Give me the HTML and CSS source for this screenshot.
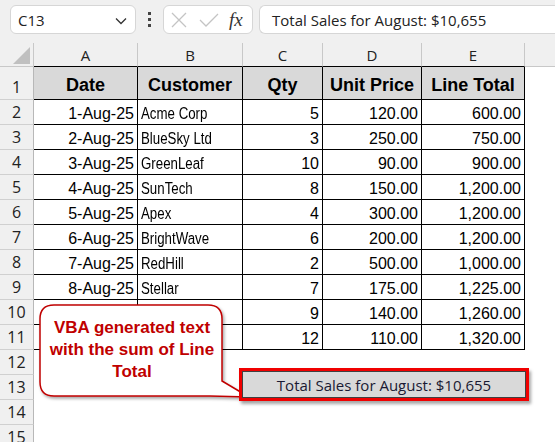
FILE: index.html
```html
<!DOCTYPE html>
<html>
<head>
<meta charset="utf-8">
<link rel="stylesheet" href="styles.css">
</head>
<body>
<div class="app">
  <div class="toolbar">
    <div class="namebox">
      <span class="nb-text">C13</span>
      <svg class="chev" width="12" height="8" viewBox="0 0 12 8"><path d="M1 1.5 L6 6.5 L11 1.5" fill="none" stroke="#333" stroke-width="1.3"/></svg>
    </div>
    <div class="vdots"><span></span><span></span><span></span></div>
    <div class="fxbox">
      <svg width="16" height="16" viewBox="0 0 16 16"><path d="M1 1 L15 15 M15 1 L1 15" stroke="#c4c4c4" stroke-width="1.3" fill="none"/></svg>
      <svg width="20" height="16" viewBox="0 0 20 16"><path d="M1 8 L7 14 L19 2" stroke="#c4c4c4" stroke-width="1.3" fill="none"/></svg>
      <span class="fx">fx</span>
    </div>
    <div class="formula">Total Sales for August: $10,655</div>
  </div>

  <div class="sheet">
    <div class="corner"><svg width="33" height="24" viewBox="0 0 33 24"><polygon points="13,21 30,21 30,4" fill="#c0c0c0"/></svg></div>
    <div class="ch t-b">A</div><div class="ch t-b">B</div><div class="ch t-b">C</div><div class="ch t-b">D</div><div class="ch t-b">E</div><div class="ch last"></div>

    <div class="rh">1</div>
    <div class="c t h">Date</div><div class="c t h">Customer</div><div class="c t h">Qty</div><div class="c t h">Unit Price</div><div class="c t h">Line Total</div><div class="c"></div>

    <div class="rh">2</div>
    <div class="c t d">1-Aug-25</div><div class="c t n"><span>Acme Corp</span></div><div class="c t r">5</div><div class="c t r">120.00</div><div class="c t r">600.00</div><div class="c"></div>
    <div class="rh">3</div>
    <div class="c t d">2-Aug-25</div><div class="c t n"><span>BlueSky Ltd</span></div><div class="c t r">3</div><div class="c t r">250.00</div><div class="c t r">750.00</div><div class="c"></div>
    <div class="rh">4</div>
    <div class="c t d">3-Aug-25</div><div class="c t n"><span>GreenLeaf</span></div><div class="c t r">10</div><div class="c t r">90.00</div><div class="c t r">900.00</div><div class="c"></div>
    <div class="rh">5</div>
    <div class="c t d">4-Aug-25</div><div class="c t n"><span>SunTech</span></div><div class="c t r">8</div><div class="c t r">150.00</div><div class="c t r">1,200.00</div><div class="c"></div>
    <div class="rh">6</div>
    <div class="c t d">5-Aug-25</div><div class="c t n"><span>Apex</span></div><div class="c t r">4</div><div class="c t r">300.00</div><div class="c t r">1,200.00</div><div class="c"></div>
    <div class="rh">7</div>
    <div class="c t d">6-Aug-25</div><div class="c t n"><span>BrightWave</span></div><div class="c t r">6</div><div class="c t r">200.00</div><div class="c t r">1,200.00</div><div class="c"></div>
    <div class="rh">8</div>
    <div class="c t d">7-Aug-25</div><div class="c t n"><span>RedHill</span></div><div class="c t r">2</div><div class="c t r">500.00</div><div class="c t r">1,000.00</div><div class="c"></div>
    <div class="rh">9</div>
    <div class="c t d">8-Aug-25</div><div class="c t n"><span>Stellar</span></div><div class="c t r">7</div><div class="c t r">175.00</div><div class="c t r">1,225.00</div><div class="c"></div>
    <div class="rh">10</div>
    <div class="c t d"></div><div class="c t n"></div><div class="c t r">9</div><div class="c t r">140.00</div><div class="c t r">1,260.00</div><div class="c"></div>
    <div class="rh">11</div>
    <div class="c t d"></div><div class="c t n"></div><div class="c t r">12</div><div class="c t r">110.00</div><div class="c t r">1,320.00</div><div class="c"></div>
    <div class="rh">12</div><div class="c"></div><div class="c"></div><div class="c"></div><div class="c"></div><div class="c"></div><div class="c"></div>
    <div class="rh">13</div><div class="c"></div><div class="c"></div><div class="c"></div><div class="c"></div><div class="c"></div><div class="c"></div>
    <div class="rh">14</div><div class="c"></div><div class="c"></div><div class="c"></div><div class="c"></div><div class="c"></div><div class="c"></div>
    <div class="rh">15</div><div class="c"></div><div class="c"></div><div class="c"></div><div class="c"></div><div class="c"></div><div class="c"></div>
  </div>

  <div class="callout">
    <svg class="callout-bg" width="230" height="110" viewBox="0 0 230 110">
      <defs>
        <filter id="sh" x="-10%" y="-10%" width="130%" height="130%">
          <feDropShadow dx="1.5" dy="2" stdDeviation="1.5" flood-color="#000" flood-opacity="0.35"/>
        </filter>
      </defs>
      <path d="M16 2 H170 Q184 2 184 16 V78 L211 94 L172 93 H16 Q2 93 2 79 V16 Q2 2 16 2 Z" fill="#fff" stroke="#c00000" stroke-width="1.5" filter="url(#sh)"/>
    </svg>
    <div class="callout-text">VBA generated text with the sum of Line Total</div>
  </div>

  <div class="tbox">
    <div class="tbox-in">Total Sales for August: $10,655</div>
  </div>
</div>
</body>
</html>
```

FILE: styles.css
```css
html, body {
  margin: 0;
  padding: 0;
  background: #ffffff;
}
.app {
  position: relative;
  width: 555px;
  height: 442px;
  overflow: hidden;
  background: #ffffff;
  font-family: "Liberation Sans", Arial, sans-serif;
}
.toolbar {
  height: 43px;
  box-sizing: border-box;
  background: #f0f0f0;
  display: flex;
  align-items: flex-start;
  padding: 5px 0 0 10px;
}
.namebox {
  width: 126px;
  height: 29px;
  box-sizing: border-box;
  background: #fff;
  border: 1px solid #d6d6d6;
  border-radius: 6px;
  display: flex;
  align-items: center;
  justify-content: space-between;
  padding: 0 8px 0 7px;
  font-family: "Open Sans", "Noto Sans", sans-serif;
  font-size: 15px;
  color: #222;
}
.chev { margin-top: 2px; }
.vdots {
  width: 27px;
  height: 29px;
  display: flex;
  flex-direction: column;
  align-items: center;
  justify-content: center;
  gap: 3px;
}
.vdots span {
  width: 3px;
  height: 3px;
  background: #444;
}
.fxbox {
  width: 90px;
  height: 29px;
  box-sizing: border-box;
  background: #fff;
  border: 1px solid #d6d6d6;
  border-radius: 6px;
  display: flex;
  align-items: center;
  gap: 12px;
  padding-left: 7px;
}
.fx {
  font-family: "Liberation Serif", serif;
  font-style: italic;
  font-size: 19px;
  color: #333;
  margin-left: -2px;
}
.formula {
  flex: 1;
  margin-left: 6px;
  height: 29px;
  box-sizing: border-box;
  background: #fff;
  border: 1px solid #d6d6d6;
  border-right: none;
  border-radius: 6px 0 0 6px;
  padding-left: 12px;
  display: flex;
  align-items: center;
  font-family: "Open Sans", "Noto Sans", sans-serif;
  font-size: 15px;
  color: #222;
}
.sheet {
  display: grid;
  grid-template-columns: 34px 104px 105px 80px 99px 103px 1fr;
  grid-template-rows: 24px 33px repeat(14, 25px);
}
.sheet > div {
  box-sizing: border-box;
}
.corner {
  background: #f0f0f0;
  border-right: 1px solid #c8c8c8;
  border-bottom: 1px solid #c8c8c8;
}
.corner svg { display: block; }
.ch {
  background: #f0f0f0;
  border-right: 1px solid #c8c8c8;
  border-bottom: 1px solid #c8c8c8;
  display: flex;
  align-items: center;
  justify-content: center;
  font-family: "Open Sans", "Noto Sans", sans-serif;
  font-size: 15px;
  color: #222;
}
.ch.t-b { border-bottom: 1px solid #000; }
.ch.last { border-right: none; }
.rh {
  background: #f0f0f0;
  border-right: 1px solid #b8b8b8;
  border-bottom: 1px solid #d0d0d0;
  display: flex;
  align-items: flex-end;
  justify-content: center;
  padding-bottom: 1px;
  font-family: "Open Sans", "Noto Sans", sans-serif;
  font-size: 16px;
  color: #222;
}
.c {
  display: flex;
  align-items: flex-end;
  padding: 0 3px 1px 3px;
  font-size: 16px;
  color: #000;
  white-space: nowrap;
  overflow: hidden;
}
.t {
  border-right: 1px solid #000;
  border-bottom: 1px solid #000;
}
.h {
  background: #d9d9d9;
  font-weight: bold;
  font-size: 18px;
  justify-content: center;
  align-items: center;
  padding-top: 5px;
}
.d {
  justify-content: flex-end;
}
.n {
  justify-content: flex-start;
}
.n span {
  display: inline-block;
  transform: scaleX(0.83);
  transform-origin: left bottom;
}
.r {
  justify-content: flex-end;
}
.callout {
  position: absolute;
  left: 38px;
  top: 303px;
  width: 188px;
  height: 95px;
}
.callout-bg {
  position: absolute;
  left: 0;
  top: 0;
}
.callout-text {
  position: relative;
  box-sizing: border-box;
  width: 188px;
  padding: 14px 4px 0 4px;
  text-align: center;
  font-weight: bold;
  font-size: 17px;
  line-height: 22px;
  color: #c00000;
}
.tbox {
  position: absolute;
  left: 239px;
  top: 368px;
  width: 290px;
  height: 33px;
  box-sizing: border-box;
  border: 3px solid #f00000;
  box-shadow: 2px 3px 3px rgba(0,0,0,0.35);
}
.tbox-in {
  height: 100%;
  box-sizing: border-box;
  border: 1px solid #404040;
  background: #d9d9d9;
  display: flex;
  align-items: center;
  justify-content: center;
  font-family: "Open Sans", "Noto Sans", sans-serif;
  font-size: 15px;
  color: #1a1a33;
}
```
